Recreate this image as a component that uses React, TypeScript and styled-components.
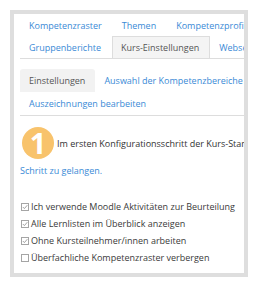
import React from "react";
import styled, { createGlobalStyle } from "styled-components";

const GlobalStyle = createGlobalStyle`
  html, body {
    margin: 0;
    padding: 0;
    background: #ffffff;
  }
  body {
    font-family: "Open Sans", "Liberation Sans", sans-serif;
    font-size: 9px;
    color: #444444;
  }
`;

const Frame = styled.div`
  margin: 10px 0 0 10px;
  width: 238px;
  height: 267px;
  box-sizing: border-box;
  border: 4px solid #dedede;
  overflow: hidden;
  padding-left: 6px;
  background: #fff;
`;

const TabNav = styled.div`
  display: flex;
  flex-direction: column;
  border-bottom: 1px solid #dddddd;
`;

const TabRow = styled.div`
  display: flex;
  white-space: nowrap;
  height: 22px;
`;

const Tab = styled.div<{ $active?: boolean }>`
  flex: none;
  box-sizing: border-box;
  height: 22px;
  line-height: 21px;
  padding: 0 10px 0 8px;
  color: ${(p) => (p.$active ? "#555555" : "#3a8ad6")};
  background: ${(p) => (p.$active ? "#f4f4f4" : "transparent")};
  border: 1px solid ${(p) => (p.$active ? "#dddddd" : "transparent")};
  border-bottom: none;
`;

const SubNav = styled.div`
  margin-top: 10px;
  display: flex;
  flex-direction: column;
  border-bottom: 1px solid #dddddd;
`;

const SubRow = styled.div`
  display: flex;
  white-space: nowrap;
  height: 23px;
`;

const Pill = styled.div<{ $active?: boolean }>`
  flex: none;
  height: 23px;
  line-height: 23px;
  padding: 0 10px 0 9px;
  color: ${(p) => (p.$active ? "#555555" : "#3a8ad6")};
  background: ${(p) => (p.$active ? "#f2f2f2" : "transparent")};
  border-radius: 3px 3px 0 0;
`;

const Intro = styled.div`
  margin-top: 11px;
  display: flex;
  align-items: center;
  white-space: nowrap;
  color: #333333;
`;

const Badge = styled.div`
  flex: none;
  width: 32px;
  height: 32px;
  margin: 0 3px 0 2px;
  border-radius: 50%;
  background: #f8c36c;
  color: #ffffff;
  font-family: "Open Sans", sans-serif;
  font-weight: 700;
  font-size: 29px;
  line-height: 32px;
  text-align: center;
`;

const StepLink = styled.div`
  margin-top: 5px;
  color: #3a8ad6;
  line-height: 14px;
`;

const Options = styled.div`
  margin-top: 20px;
  display: flex;
  flex-direction: column;
`;

const Option = styled.label`
  display: flex;
  align-items: center;
  height: 17px;
  white-space: nowrap;
  color: #3a3a3a;
`;

const Box = styled.span`
  flex: none;
  width: 8px;
  height: 8px;
  box-sizing: border-box;
  border: 1px solid #a5a5a5;
  margin: 0 2px 0 1px;
  display: flex;
  align-items: center;
  justify-content: center;
`;

const Check = () => (
  <svg width="6" height="6" viewBox="0 0 6 6">
    <path d="M0.8 3 L2.4 4.6 L5.3 1.2" fill="none" stroke="#999999" strokeWidth="0.9" />
  </svg>
);

const options = [
  { label: "Ich verwende Moodle Aktivitäten zur Beurteilung", checked: true },
  { label: "Alle Lernlisten im Überblick anzeigen", checked: true },
  { label: "Ohne Kursteilnehmer/innen arbeiten", checked: true },
  { label: "Überfachliche Kompetenzraster verbergen", checked: false },
];

export default function App() {
  return (
    <>
      <GlobalStyle />
      <Frame>
        <TabNav>
          <TabRow>
            <Tab>Kompetenzraster</Tab>
            <Tab>Themen</Tab>
            <Tab>Kompetenzprofil</Tab>
          </TabRow>
          <TabRow>
            <Tab>Gruppenberichte</Tab>
            <Tab $active>Kurs-Einstellungen</Tab>
            <Tab>Webservices</Tab>
          </TabRow>
        </TabNav>
        <SubNav>
          <SubRow>
            <Pill $active>Einstellungen</Pill>
            <Pill>Auswahl der Kompetenzbereiche</Pill>
          </SubRow>
          <SubRow>
            <Pill>Auszeichnungen bearbeiten</Pill>
          </SubRow>
        </SubNav>
        <Intro>
          <Badge>1</Badge>
          Im ersten Konfigurationsschritt der Kurs-Standards
        </Intro>
        <StepLink>Schritt zu gelangen.</StepLink>
        <Options>
          {options.map((o) => (
            <Option key={o.label}>
              <Box>{o.checked && <Check />}</Box>
              {o.label}
            </Option>
          ))}
        </Options>
      </Frame>
    </>
  );
}
